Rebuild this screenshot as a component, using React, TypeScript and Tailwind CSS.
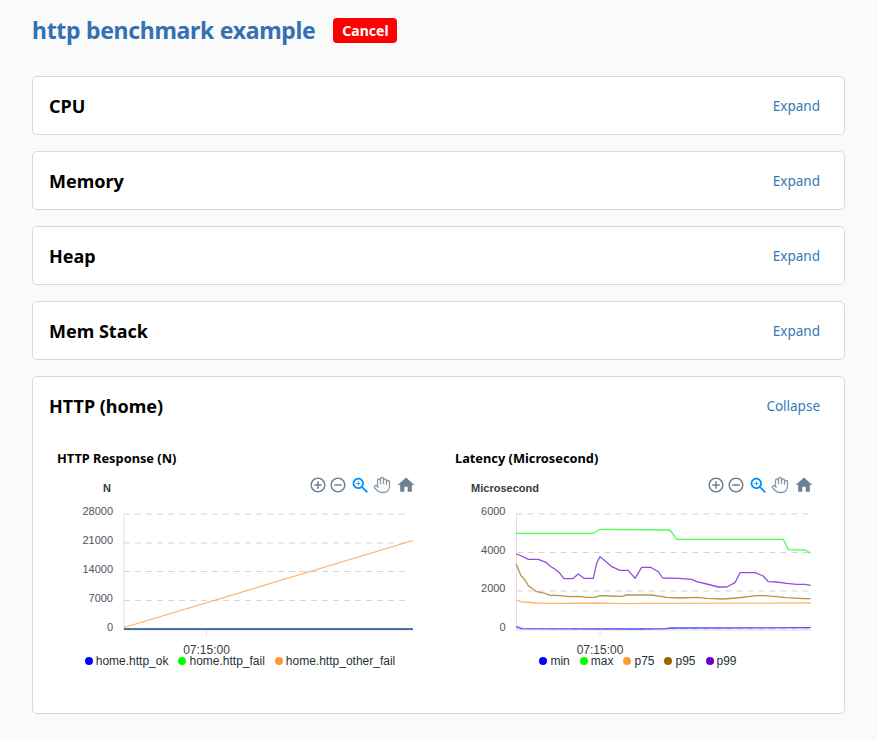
import React from 'react';
import { Hand } from 'lucide-react';

const UI_FONT = 'font-["Noto_Sans",sans-serif]';

// traced from the latency chart, points are 3x offset from (440,440)
const z = (pts: number[][]) =>
  pts.map(([x, y]) => `${(440 + x / 3).toFixed(1)},${(440 + y / 3).toFixed(1)}`).join(' ');

const latencySeries = [
  {
    color: '#0000ff',
    points: [[229, 560], [245, 566], [600, 567], [680, 566], [690, 564], [1112, 563]]
  },
  {
    color: '#00ff00',
    points: [[229, 280], [460, 280], [480, 268], [690, 270], [710, 298], [1030, 298], [1045, 329], [1095, 330], [1112, 340]]
  },
  {
    color: '#ff9933',
    points: [[229, 480], [250, 486], [290, 489], [330, 490], [480, 489], [550, 491], [620, 490], [1112, 489]]
  },
  {
    color: '#996600',
    points: [[229, 373], [243, 407], [255, 420], [265, 437], [290, 455], [315, 460], [330, 466], [350, 466], [390, 470], [415, 469], [440, 472], [465, 472], [480, 467], [510, 468], [545, 469], [560, 465], [635, 465], [680, 472], [720, 474], [770, 472], [800, 475], [850, 477], [890, 474], [950, 467], [975, 467], [1040, 473], [1090, 476], [1112, 476]]
  },
  {
    color: '#6600cc',
    points: [[229, 342], [245, 348], [265, 358], [295, 358], [320, 368], [330, 378], [345, 388], [358, 398], [372, 416], [398, 416], [415, 402], [432, 415], [460, 415], [470, 370], [480, 350], [495, 362], [515, 380], [540, 391], [565, 391], [585, 415], [605, 382], [632, 382], [655, 395], [668, 414], [715, 415], [755, 418], [770, 425], [800, 432], [835, 441], [860, 441], [885, 428], [900, 398], [945, 398], [970, 408], [985, 425], [1010, 426], [1040, 430], [1070, 433], [1095, 433], [1112, 436]]
  }
];

const Toolbar = () => (
  <div className="flex items-center h-5 mr-3 text-[#6e8192]">
    <div className="w-5 flex justify-center">
      <svg width="18" height="18" viewBox="0 0 24 24" fill="currentColor">
        <path d="M13 7h-2v4H7v2h4v4h2v-4h4v-2h-4V7zm-1-5C6.48 2 2 6.48 2 12s4.48 10 10 10 10-4.48 10-10S17.52 2 12 2zm0 18c-4.41 0-8-3.59-8-8s3.59-8 8-8 8 3.59 8 8-3.59 8-8 8z" />
      </svg>
    </div>
    <div className="w-5 flex justify-center">
      <svg width="18" height="18" viewBox="0 0 24 24" fill="currentColor">
        <path d="M7 11v2h10v-2H7zm5-9C6.48 2 2 6.48 2 12s4.48 10 10 10 10-4.48 10-10S17.52 2 12 2zm0 18c-4.41 0-8-3.59-8-8s3.59-8 8-8 8 3.59 8 8-3.59 8-8 8z" />
      </svg>
    </div>
    <div className="w-[22px] pl-[2px] flex text-[#008ffb]">
      <svg width="21" height="21" viewBox="0 0 24 24" fill="currentColor" className="shrink-0">
        <path d="M15.5 14h-.79l-.28-.27C15.41 12.59 16 11.11 16 9.5 16 5.91 13.09 3 9.5 3S3 5.91 3 9.5 5.91 16 9.5 16c1.61 0 3.09-.59 4.23-1.57l.27.28v.79l5 4.99L20.49 19l-4.99-5zm-6 0C7.01 14 5 11.99 5 9.5S7.01 5 9.5 5 14 7.01 14 9.5 11.99 14 9.5 14z" />
        <path d="M12 10h-2v2H9v-2H7V9h2V7h1v2h2v1z" />
      </svg>
    </div>
    <div className="w-6 flex justify-center">
      <Hand size={18} strokeWidth={1.7} className="text-[#8a99a6]" />
    </div>
    <div className="w-6 flex justify-center">
      <svg width="20" height="20" viewBox="0 0 24 24" fill="currentColor">
        <path d="M10 20v-6h4v6h5v-8h3L12 3 2 12h3v8z" />
      </svg>
    </div>
  </div>
);

const Chart = ({ title, unit, originX, axisX, tickX, endX, gridEndX, ticks, legend, children }: any) => (
  <div className="w-[381px]">
    <h3 className={`${UI_FONT} pl-2 text-[12.8px] leading-[14px] font-bold text-black`}>{title}</h3>
    <div className="flex justify-between mt-[10px]">
      <div className="w-[116px] pt-[6px] text-center text-[11px] leading-[14px] font-bold text-[#373d3f] whitespace-nowrap font-['Liberation_Sans',sans-serif]">
        {unit}
      </div>
      <Toolbar />
    </div>
    <svg
      width="381"
      height="154"
      viewBox={`${originX} 500 381 154`}
      className="block mt-[5px] overflow-visible font-['Liberation_Sans',sans-serif]"
    >
      {ticks.map((t: any) => (
        <g key={t.label}>
          <line x1={axisX} x2={gridEndX} y1={t.y} y2={t.y} stroke="#d4d4d4" strokeDasharray="6 5" />
          <text x={axisX - 11} y={t.y + 1} textAnchor="end" fontSize="11" fill="#4b5563">
            {t.label}
          </text>
        </g>
      ))}
      <line x1={axisX} x2={axisX} y1={513} y2={630} stroke="#e0e0e0" />
      <line x1={axisX} x2={endX} y1={630} y2={630} stroke="#e0e0e0" />
      <line x1={tickX} x2={tickX} y1={630} y2={636} stroke="#e0e0e0" />
      <text x={tickX} y={654} textAnchor="middle" fontSize="12" fill="#373d3f">
        07:15:00
      </text>
      {children}
    </svg>
    <div className="flex justify-center gap-[10px] pl-[1px] text-[12px] leading-[14px] text-[#263238] font-['Liberation_Sans',sans-serif]">
      {legend.map((l: any) => (
        <div key={l.name} className="flex items-center gap-[3px]">
          <span className={`w-2 h-2 rounded-full ${l.className}`}></span>
          <span>{l.name}</span>
        </div>
      ))}
    </div>
  </div>
);

const SectionHeader = ({ title, action }: { title: string; action: string }) => (
  <div className="flex items-center justify-between h-[57px] pl-4 pr-6 pt-[2px]">
    <h2 className="text-[18px] font-bold text-black">{title}</h2>
    <a className="text-[13.5px] text-[#337ab7]">{action}</a>
  </div>
);

const App: React.FC = () => {
  return (
    <div className={`${UI_FONT} min-h-[740px] bg-[#fafafa] px-8 pt-[12px]`}>
      <div className="flex items-center gap-[18px] h-9">
        <h1 className="text-[23px] tracking-[-0.3px] font-bold text-[#3470b4]">http benchmark example</h1>
        <button className="h-[25px] w-16 rounded bg-[#ff0000] text-white text-[14px] font-bold">Cancel</button>
      </div>

      <div className="mt-[28px] flex flex-col gap-4">
        {['CPU', 'Memory', 'Heap', 'Mem Stack'].map((name) => (
          <div key={name} className="bg-white border border-[#d9d9d9] rounded-[5px]">
            <SectionHeader title={name} action="Expand" />
          </div>
        ))}

        <div className="bg-white border border-[#d9d9d9] rounded-[5px] pb-[45px]">
          <SectionHeader title="HTTP (home)" action="Collapse" />
          <div className="flex gap-[17px] pl-4 pt-[17px]">
            <Chart
              title="HTTP Response (N)"
              unit="N"
              originX={49}
              axisX={124}
              tickX={206.5}
              endX={413}
              gridEndX={409}
              ticks={[
                { label: '28000', y: 514 },
                { label: '21000', y: 543 },
                { label: '14000', y: 571.5 },
                { label: '7000', y: 600.5 }
              ]}
              legend={[
                { name: 'home.http_ok', className: 'bg-[#0000ff]' },
                { name: 'home.http_fail', className: 'bg-[#00ff00]' },
                { name: 'home.http_other_fail', className: 'bg-[#ff9933]' }
              ]}
            >
              <text x={113} y={631} textAnchor="end" fontSize="11" fill="#4b5563">0</text>
              <line x1={124} x2={413} y1={629} y2={629} stroke="#00ff00" strokeOpacity="0.3" />
              <line x1={124} x2={413} y1={629} y2={629} stroke="#0a2f9f" strokeWidth="1.3" strokeOpacity="0.9" />
              <line x1={124} x2={413} y1={627.5} y2={540.5} stroke="#ff9933" strokeWidth="1.2" strokeOpacity="0.75" />
            </Chart>
            <Chart
              title="Latency (Microsecond)"
              unit="Microsecond"
              originX={447}
              axisX={516.5}
              tickX={600}
              endX={811}
              gridEndX={811}
              ticks={[
                { label: '6000', y: 514 },
                { label: '4000', y: 552.5 },
                { label: '2000', y: 591 }
              ]}
              legend={[
                { name: 'min', className: 'bg-[#0000ff]' },
                { name: 'max', className: 'bg-[#00ff00]' },
                { name: 'p75', className: 'bg-[#ff9933]' },
                { name: 'p95', className: 'bg-[#996600]' },
                { name: 'p99', className: 'bg-[#6600cc]' }
              ]}
            >
              <line x1={516.5} x2={811} y1={629} y2={629} stroke="#d4d4d4" strokeDasharray="6 5" />
              <text x={505.5} y={631} textAnchor="end" fontSize="11" fill="#4b5563">0</text>
              {latencySeries.map((s) => (
                <polyline
                  key={s.color}
                  points={z(s.points)}
                  fill="none"
                  stroke={s.color}
                  strokeWidth="1.3"
                  strokeOpacity="0.7"
                  strokeLinejoin="round"
                />
              ))}
            </Chart>
          </div>
        </div>
      </div>
    </div>
  );
};

export default App;
